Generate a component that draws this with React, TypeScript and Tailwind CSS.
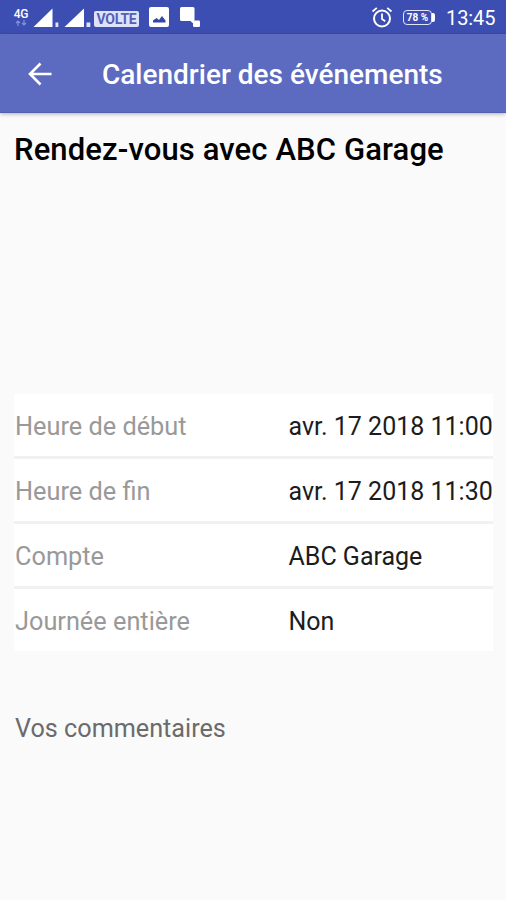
import React from "react";

function SignalIcons() {
  return (
    <svg className="h-[34px] w-[62px] shrink-0" viewBox="0 0 62 34" fill="#fff">
      <path d="M20.5 8.500v18.500H1.500z" />
      <path d="M52 8.500v18.500H32.500z" />
      <rect x="23.500" y="22.500" width="2.800" height="4.500" opacity=".85" />
      <rect x="54.500" y="22.500" width="3.800" height="4.500" opacity=".85" />
    </svg>
  );
}

function StatusBar() {
  return (
    <div className="flex h-[34px] items-center bg-[#3d4eb3] text-white">
      <div className="ml-[10px] flex w-[22px] flex-col items-center pb-px">
        <span className="text-[12px] leading-[12px] font-medium tracking-[-0.2px]">4G</span>
        <svg className="h-[6px] w-[14px]" viewBox="0 0 14 6" fill="none" stroke="#8791d8" strokeWidth="1.2">
          <path d="M4 6V1M2 3l2-2 2 2M10 0v5M8 3l2 2 2-2" />
        </svg>
      </div>
      <SignalIcons />
      <div className="mt-[3px] flex h-[16px] w-[45px] items-center justify-center rounded-[2px] bg-[#dfe3fa] text-[#5361b8]">
        <span className="text-[14px] leading-[16px] font-bold tracking-[-0.3px]">VOLTE</span>
      </div>
      <svg className="ml-[10px] h-[20px] w-[20px] shrink-0" viewBox="0 0 20 20">
        <rect x="0" y="0" width="20" height="20" rx="2" fill="#fff" />
        <path d="M4 15.500v-2l3.500-2.500 2.500 2 3-4 3.500 4.500v2z" fill="#3446a8" />
      </svg>
      <svg className="ml-[10px] h-[22px] w-[22px] shrink-0" viewBox="0 0 22 22" fill="#fff">
        <rect x="1" y="1" width="14.500" height="14" rx="1.500" />
        <rect x="14" y="14.500" width="7" height="6.500" rx="1.200" />
        <path d="M3 14h12v3h-1.500l-2-2H3z" />
      </svg>
      <svg className="ml-auto h-[22px] w-[22px] shrink-0" viewBox="0 0 22 22" fill="none" stroke="#fff" strokeWidth="2">
        <circle cx="11" cy="12.500" r="8" />
        <path d="M11 7.500v5.500l3.200 2.300M1.500 5.500l4.300-3.600M20.500 5.500l-4.300-3.600" strokeWidth="1.800" />
      </svg>
      <div className="ml-[10px] flex items-center">
        <div className="flex h-[15px] w-[29px] items-center justify-center rounded-[4px] border-[1.5px] border-[#e2e5fa]">
          <span className="pt-px text-[10px] leading-[12px] font-bold whitespace-pre">78 %</span>
        </div>
        <div className="h-[9px] w-[3px] rounded-r-[2px] bg-white" />
      </div>
      <span className="mr-[9px] ml-[11px] w-[51px] pt-[2px] text-[20px] leading-[32px] tracking-[-0.1px] whitespace-nowrap">
        13:45
      </span>
    </div>
  );
}

const rows = [
  { label: "Heure de début", value: "avr. 17 2018 11:00" },
  { label: "Heure de fin", value: "avr. 17 2018 11:30" },
  { label: "Compte", value: "ABC Garage" },
  { label: "Journée entière", value: "Non" },
];

export default function App() {
  return (
    <div className="h-[900px] w-[506px] overflow-hidden bg-[#fafafa] font-[Roboto,sans-serif]">
      <StatusBar />
      <header className="flex h-[79px] items-center border-b border-[#5260b3] bg-[#5c6bc0] text-white shadow-[0_1px_4px_rgba(0,0,0,0.3)]">
        <svg className="mt-px ml-[28px] h-[24px] w-[24px]" viewBox="0 0 24 24" fill="none" stroke="#fff" strokeWidth="2.6">
          <path d="M23.500 12H2.500M12.500 1.500L2 12l10.500 10.500" />
        </svg>
        <span className="ml-[50px] pt-[4px] text-[28px] leading-[34px] font-medium whitespace-nowrap">
          Calendrier des événements
        </span>
      </header>
      <h1 className="mt-[19px] ml-[14px] text-[31px] leading-[36px] font-medium tracking-[0.12px] whitespace-nowrap text-black">
        Rendez-vous avec ABC Garage
      </h1>
      <dl className="mt-[226px] mr-[13px] ml-[14px] flex flex-col bg-white">
        {rows.map((row) => (
          <div
            key={row.label}
            className="flex h-[65px] items-center border-b-[3px] border-[#f1f1f1] pt-[4px] pl-px text-[25px] leading-[30px] whitespace-nowrap last:h-[62px] last:border-b-0"
          >
            <dt className="w-[273.5px] text-[25.3px] text-[#999]">{row.label}</dt>
            <dd className="text-[#1c1c1c]">{row.value}</dd>
          </div>
        ))}
      </dl>
      <p className="mt-[63px] ml-[15px] text-[25.2px] leading-[30px] text-[#6b6b6b]">Vos commentaires</p>
    </div>
  );
}
